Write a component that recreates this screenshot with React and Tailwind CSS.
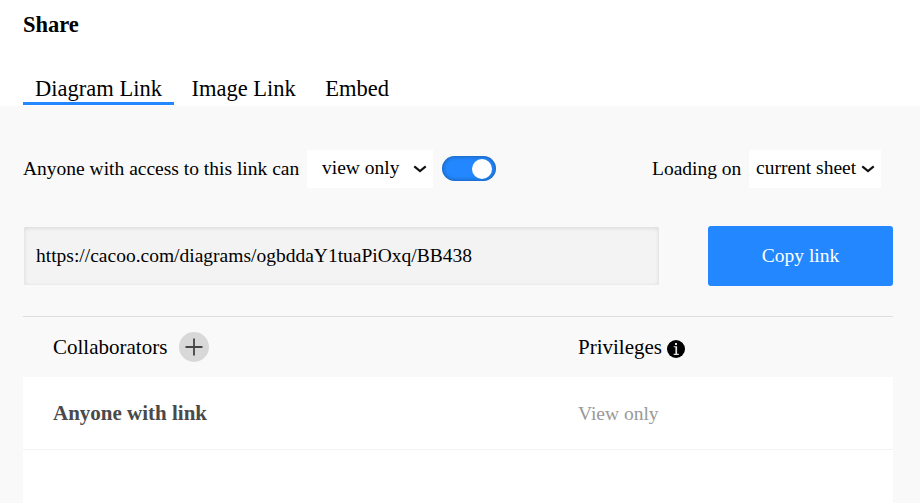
function Chevron() {
  return (
    <svg width="14" height="8" viewBox="0 0 14 8" className="block shrink-0" fill="none">
      <path d="M1.3 1.4L7 6L12.7 1.4" stroke="#111" strokeWidth="2.2" />
    </svg>
  );
}

function InfoIcon() {
  return (
    <svg width="18" height="18" viewBox="0 0 18 18" className="ml-[5px] mt-[4px] block shrink-0">
      <circle cx="9" cy="9" r="9" fill="#000" />
      <path d="M8 3h2v2H8zM6.7 6.2h3.4v7.6h1.7v1.1H6.7v-1.1h1.7V7.2H6.7z" fill="#e4e4e4" />
    </svg>
  );
}

function Tabs() {
  return (
    <nav className="mt-[38px] flex h-[29px] text-[22.5px] leading-[26px]">
      <button className="h-[29px] w-[151px] border-b-[3px] border-[#2388ff] leading-[26px]">
        Diagram Link
      </button>
      <button className="ml-[17.5px] h-[26px]">Image Link</button>
      <button className="ml-[29.5px] h-[26px]">Embed</button>
    </nav>
  );
}

export default function App() {
  return (
    <div className="h-[503px] w-[920px] overflow-hidden bg-white font-['Liberation_Serif','Times_New_Roman',serif] text-[19.5px] whitespace-nowrap text-black">
      <header className="h-[106px] px-[23px] pt-[12px]">
        <h1 className="h-[26px] text-[22.5px] leading-[26px] font-bold">Share</h1>
        <Tabs />
      </header>

      <main className="h-[397px] bg-[#f9f9f9] pr-[27px] pl-[23px] pt-[44px]">
        <div className="flex h-[38px] items-center">
          <span className="w-[284px]">Anyone with access to this link can</span>
          <button className="flex h-[38px] w-[126px] items-center justify-between bg-white pr-[6px] pl-[15px]">
            <span className="-mt-[2px]">view only</span>
            <Chevron />
          </button>
          <button className="-mt-px ml-[9px] flex h-[25px] w-[54px] items-center justify-end rounded-full bg-[#2388ff] pr-[4px] shadow-[inset_0_0_5px_rgba(0,0,0,0.4)]">
            <span className="mt-px h-[20px] w-[20px] rounded-full bg-white" />
          </button>
          <span className="ml-auto w-[97px]">Loading on</span>
          <button className="mr-[12px] flex h-[38px] w-[132px] items-center justify-between bg-white pr-[6px] pl-[7px]">
            <span className="-mt-[2px]">current sheet</span>
            <Chevron />
          </button>
        </div>

        <div className="mt-[38px] flex h-[60px] items-center justify-between">
          <div className="ml-px flex h-[58px] w-[635px] items-center rounded-[2px] bg-[#f3f3f3] pl-[12px] shadow-[inset_0_1px_4px_rgba(0,0,0,0.12)]">
            https://cacoo.com/diagrams/ogbddaY1tuaPiOxq/BB438
          </div>
          <button className="h-[60px] w-[185px] rounded-[3px] bg-[#2388ff] text-white">Copy link</button>
        </div>

        <section className="mt-[30px] border-t border-[#dddfdf]">
          <div className="flex h-[60px] items-center text-[21px]">
            <div className="flex w-[555px] items-center pl-[30px]">
              <span className="pt-[2px]">Collaborators</span>
              <button className="ml-[12px] flex h-[30px] w-[30px] items-center justify-center rounded-full bg-[#d8d8d8]">
                <svg width="30" height="30" viewBox="0 0 30 30" className="block">
                  <path d="M6.5 15H23.5M15 6.5V23.5" stroke="#444" strokeWidth="1.8" />
                </svg>
              </button>
            </div>
            <span className="pt-[2px]">Privileges</span>
            <InfoIcon />
          </div>
          <div className="h-[126px] bg-white">
            <div className="flex h-[73px] items-center border-b border-[#f1f2f2] pt-[2px]">
              <span className="w-[555px] pl-[30px] text-[21px] font-bold text-[#4a4a4a]">Anyone with link</span>
              <span className="text-[#999]">View only</span>
            </div>
          </div>
        </section>
      </main>
    </div>
  );
}
